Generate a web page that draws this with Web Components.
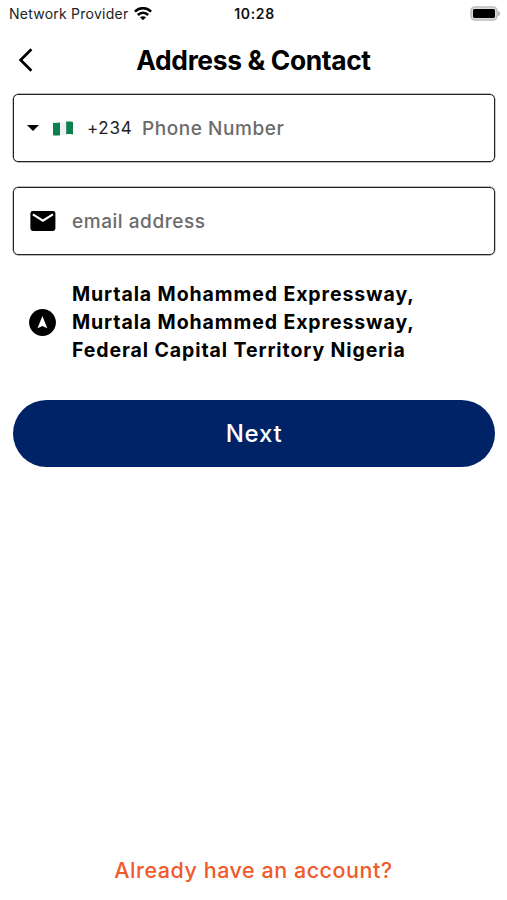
<!DOCTYPE html>
<html lang="en">
<head>
<meta charset="utf-8">
<title>Address &amp; Contact</title>
<style>
  body {
    margin: 0;
    background: #fff;
    color: #000;
    font-family: Inter, "Liberation Sans", sans-serif;
  }
</style>
</head>
<body>
<contact-screen></contact-screen>

<script>
class StatusBar extends HTMLElement {
  constructor() {
    super();
    this.attachShadow({ mode: 'open' });
    this.shadowRoot.innerHTML = `
      <style>
        :host {
          display: grid;
          grid-template-columns: 1fr auto 1fr;
          align-items: center;
          height: 27px;
          padding: 0 7px 0 9px;
          font-size: 14px;
          line-height: 17px;
        }
        .carrier {
          display: flex;
          align-items: center;
          gap: 6px;
          color: #222;
          letter-spacing: 0.24px;
        }
        .time {
          font-weight: 600;
          letter-spacing: 0.65px;
          color: #111;
        }
        .battery {
          justify-self: end;
        }
        svg {
          display: block;
        }
      </style>
      <div class="carrier">
        <slot name="carrier"></slot>
        <svg width="18" height="14" viewBox="0 0 18 14" fill="none" stroke="#000" stroke-width="2.5">
          <path d="M0.9 4.6C5.4 0.1 12.6 0.1 17.1 4.6"/>
          <path d="M3.8 8C6.8 5.1 11.2 5.1 14.2 8"/>
          <path d="M9 13.2L6 10.3C7.7 8.8 10.3 8.8 12 10.3Z" fill="#000" stroke="none"/>
        </svg>
      </div>
      <div class="time"><slot name="time"></slot></div>
      <svg class="battery" width="30" height="15" viewBox="0 0 30 15">
        <rect x="1" y="1" width="26" height="13" rx="4" fill="#ddd" stroke="#bdbdbd" stroke-width="1.6"/>
        <rect x="3" y="3" width="22" height="9" rx="1.4"/>
        <path d="M28 4.9C31 6.2 31 8.8 28 10.1Z" fill="#b5b5b5"/>
      </svg>
    `;
  }
}

class PageHeader extends HTMLElement {
  constructor() {
    super();
    this.attachShadow({ mode: 'open' });
    this.shadowRoot.innerHTML = `
      <style>
        :host {
          display: grid;
          grid-template-columns: 40px 1fr 40px;
          align-items: center;
          height: 66px;
        }
        button {
          display: flex;
          padding: 0 0 0 17px;
          border: none;
          background: none;
        }
        h1 {
          margin: 0;
          font-size: 26.4px;
          line-height: 32px;
          font-weight: 700;
          letter-spacing: -0.36px;
          text-align: center;
          white-space: nowrap;
        }
      </style>
      <button aria-label="Back">
        <svg width="16" height="24" viewBox="0 0 16 24" fill="none" stroke="#000" stroke-width="2.7">
          <path d="M14.4 1.2L3.6 12L14.4 22.8"/>
        </svg>
      </button>
      <h1><slot></slot></h1>
    `;
  }
}

class FormField extends HTMLElement {
  constructor() {
    super();
    this.attachShadow({ mode: 'open' });
    this.shadowRoot.innerHTML = `
      <style>
        :host {
          display: flex;
          align-items: center;
          box-sizing: border-box;
          height: 68px;
          border: 1px solid #222;
          border-radius: 5px;
          box-shadow: 0 0 0 0.4px #777;
        }
        .placeholder {
          padding-top: 2px;
          color: #6b6b6b;
          font-size: 19px;
          line-height: 24px;
          font-weight: 450;
          letter-spacing: 0.55px;
        }
      </style>
      <slot name="lead"></slot>
      <span class="placeholder"><slot></slot></span>
    `;
  }
}

class CountryCode extends HTMLElement {
  constructor() {
    super();
    this.attachShadow({ mode: 'open' });
    this.shadowRoot.innerHTML = `
      <style>
        :host {
          display: flex;
          align-items: center;
          box-sizing: border-box;
          width: 128px;
          padding-left: 13px;
          color: #222;
          font-size: 17px;
          line-height: 22px;
          letter-spacing: 0.7px;
        }
        .flag {
          margin: 0 14px 0 14px;
        }
      </style>
      <svg width="12" height="6" viewBox="0 0 12 6"><path d="M0 0H12L6 6Z"/></svg>
      <svg class="flag" width="20" height="15" viewBox="0 0 20 15">
        <path d="M0 1.8C7 2.8 12 -0.6 20 0.9V13.4C12 12 7 15.6 0 14.3Z" fill="#eef1ef"/>
        <path d="M0 1.8C2.5 2.2 4.6 2 7 1.5V14.3C4.6 14.7 2.5 14.7 0 14.3Z" fill="#0b7f4e"/>
        <path d="M13.2 0.6C15.5 0.3 17.6 0.4 20 0.9V13.4C17.6 12.9 15.5 12.8 13.2 13.2Z" fill="#0b7f4e"/>
      </svg>
      <slot></slot>
    `;
  }
}

class MailIcon extends HTMLElement {
  constructor() {
    super();
    this.attachShadow({ mode: 'open' });
    this.shadowRoot.innerHTML = `
      <style>
        :host {
          display: block;
          width: 42px;
          padding-left: 16px;
        }
        svg {
          display: block;
        }
      </style>
      <svg width="26" height="20" viewBox="0 0 26 20">
        <rect x="0.4" y="0" width="25" height="20" rx="2.4"/>
        <path d="M2.9 3.4L12.9 9.8L22.9 3.4" fill="none" stroke="#fff" stroke-width="2.2"/>
      </svg>
    `;
  }
}

class AddressRow extends HTMLElement {
  constructor() {
    super();
    this.attachShadow({ mode: 'open' });
    this.shadowRoot.innerHTML = `
      <style>
        :host {
          display: flex;
          align-items: center;
          gap: 16px;
          padding-left: 16px;
          font-size: 19.5px;
          line-height: 28px;
          font-weight: 750;
          letter-spacing: 0.9px;
          white-space: nowrap;
        }
      </style>
      <svg width="27" height="27" viewBox="0 0 27 27">
        <circle cx="13.5" cy="13.5" r="13.4"/>
        <path d="M13.4 7L18.3 19.2L13.4 17L8.5 19.2Z" fill="#fff"/>
      </svg>
      <div><slot></slot></div>
    `;
  }
}

class PrimaryButton extends HTMLElement {
  constructor() {
    super();
    this.attachShadow({ mode: 'open' });
    this.shadowRoot.innerHTML = `
      <style>
        :host {
          display: block;
        }
        button {
          display: block;
          width: 100%;
          height: 67px;
          padding: 0;
          border: none;
          border-radius: 34px;
          background: #002266;
          color: #fff;
          font: 500 24px/30px Inter, "Liberation Sans", sans-serif;
          letter-spacing: 0.7px;
          cursor: pointer;
        }
      </style>
      <button><slot></slot></button>
    `;
  }
}

class ContactScreen extends HTMLElement {
  constructor() {
    super();
    this.attachShadow({ mode: 'open' });
    this.shadowRoot.innerHTML = `
      <style>
        :host {
          display: flex;
          flex-direction: column;
          box-sizing: border-box;
          height: 900px;
        }
        form-field {
          margin-bottom: 25px;
        }
        main {
          display: flex;
          flex-direction: column;
          flex: 1;
          padding: 1px 12px 0 13px;
        }
        address-row {
          margin-bottom: 36px;
        }
        .login {
          padding-bottom: 16px;
          color: #f15a2b;
          font-size: 21.5px;
          line-height: 28px;
          font-weight: 550;
          letter-spacing: 0.53px;
          text-align: center;
        }
      </style>
      <status-bar>
        <span slot="carrier">Network Provider</span>
        <span slot="time">10:28</span>
      </status-bar>
      <page-header>Address &amp; Contact</page-header>
      <main>
        <form-field>
          <country-code slot="lead">+234</country-code>
          Phone Number
        </form-field>
        <form-field>
          <mail-icon slot="lead"></mail-icon>
          email address
        </form-field>
        <address-row>Murtala Mohammed Expressway,<br>Murtala Mohammed Expressway,<br>Federal Capital Territory Nigeria</address-row>
        <primary-button>Next</primary-button>
      </main>
      <div class="login">Already have an account?</div>
    `;
  }
}

customElements.define('status-bar', StatusBar);
customElements.define('page-header', PageHeader);
customElements.define('form-field', FormField);
customElements.define('country-code', CountryCode);
customElements.define('mail-icon', MailIcon);
customElements.define('address-row', AddressRow);
customElements.define('primary-button', PrimaryButton);
customElements.define('contact-screen', ContactScreen);
</script>
</body>
</html>
